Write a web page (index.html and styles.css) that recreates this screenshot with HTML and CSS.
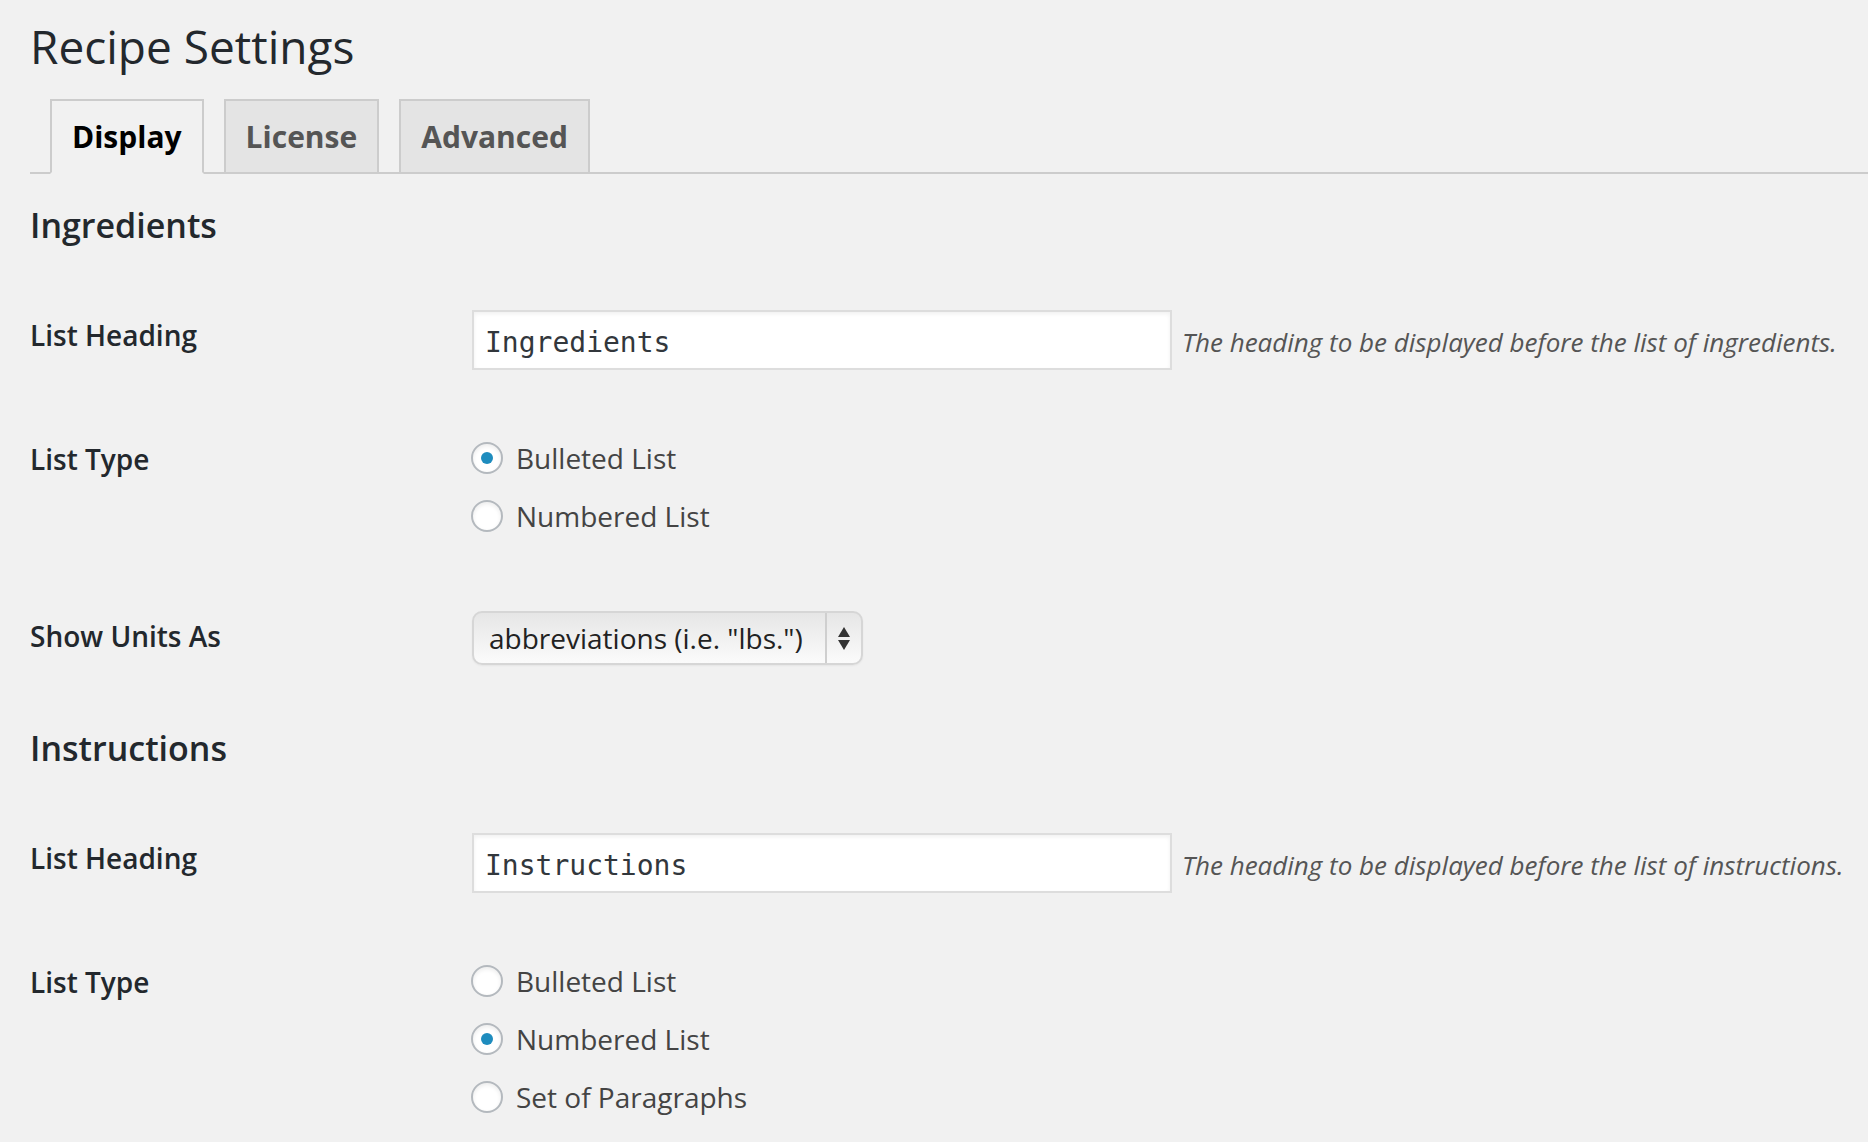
FILE: index.html
```html
<!DOCTYPE html>
<html lang="en">
<head>
<meta charset="utf-8">
<title>Recipe Settings</title>
<link rel="stylesheet" href="styles.css">
</head>
<body>
<div class="wrap">
  <h1 class="page-title">Recipe Settings</h1>
  <nav class="tabs">
    <a class="tab tab-active">Display</a>
    <a class="tab">License</a>
    <a class="tab">Advanced</a>
  </nav>

  <h3 class="section-title">Ingredients</h3>
  <div class="form">
    <div class="row">
      <div class="label label-text">List Heading</div>
      <div class="field field-inline">
        <input class="text-input" type="text" value="Ingredients">
        <span class="description">The heading to be displayed before the list of ingredients.</span>
      </div>
    </div>
    <div class="row">
      <div class="label label-radio">List Type</div>
      <div class="field field-radio">
        <div class="radio-item"><span class="radio radio-checked"></span><span class="radio-label">Bulleted List</span></div>
        <div class="radio-item"><span class="radio"></span><span class="radio-label">Numbered List</span></div>
      </div>
    </div>
    <div class="row">
      <div class="label label-select">Show Units As</div>
      <div class="field field-select">
        <div class="select">
          <span class="select-value">abbreviations (i.e. "lbs.")</span>
          <span class="select-arrows"><span class="arrow-up"></span><span class="arrow-down"></span></span>
        </div>
      </div>
    </div>
  </div>

  <h3 class="section-title section-second">Instructions</h3>
  <div class="form">
    <div class="row">
      <div class="label label-text">List Heading</div>
      <div class="field field-inline">
        <input class="text-input" type="text" value="Instructions">
        <span class="description">The heading to be displayed before the list of instructions.</span>
      </div>
    </div>
    <div class="row">
      <div class="label label-radio">List Type</div>
      <div class="field field-radio field-last">
        <div class="radio-item"><span class="radio"></span><span class="radio-label">Bulleted List</span></div>
        <div class="radio-item"><span class="radio radio-checked"></span><span class="radio-label">Numbered List</span></div>
        <div class="radio-item"><span class="radio"></span><span class="radio-label">Set of Paragraphs</span></div>
      </div>
    </div>
  </div>
</div>
</body>
</html>
```

FILE: styles.css
```css
html, body {
  margin: 0;
  padding: 0;
  background: #f1f1f1;
  overflow: hidden;
}

body {
  font-family: "Open Sans", "Liberation Sans", sans-serif;
  color: #444;
}

.wrap {
  padding-left: 30px;
}

.page-title {
  margin: 16px 0 0;
  font-size: 46px;
  font-weight: 400;
  line-height: 60px;
  color: #23282d;
}

.tabs {
  display: flex;
  margin-top: 23px;
  border-bottom: 2px solid #ccc;
}

.tab {
  margin-left: 20px;
  margin-bottom: -2px;
  padding: 12px 20px 11px;
  border: 2px solid #ccc;
  background: #e4e4e4;
  font-size: 30px;
  font-weight: 700;
  line-height: 48px;
  color: #555;
}

.tab-active {
  background: #f1f1f1;
  border-bottom-color: #f1f1f1;
  color: #000;
}

.section-title {
  margin: 29px 0 33px;
  font-size: 34px;
  font-weight: 600;
  line-height: 44px;
  color: #23282d;
}

.section-second {
  margin-top: 31px;
  margin-bottom: 33px;
}

.row {
  display: flex;
  align-items: flex-start;
}

.label {
  width: 442px;
  flex-shrink: 0;
  font-size: 28px;
  font-weight: 600;
  line-height: 36px;
  color: #23282d;
}

.label-text { padding-top: 37px; }
.label-radio { padding-top: 41px; }
.label-select { padding-top: 44px; }

.field {
  padding: 30px 0;
}

.field-inline {
  display: flex;
  align-items: baseline;
  white-space: nowrap;
}

.text-input {
  width: 700px;
  height: 60px;
  box-sizing: border-box;
  margin: 0;
  padding: 4px 11px 0;
  border: 2px solid #ddd;
  background: #fff;
  box-shadow: inset 0 2px 4px rgba(0, 0, 0, 0.06);
  font-family: "DejaVu Sans Mono", "Liberation Mono", monospace;
  font-size: 28px;
  color: #32373c;
  outline: none;
}

.description {
  margin-left: 10px;
  font-size: 26px;
  font-style: italic;
  color: #555;
}

.field-radio {
  padding-top: 29px;
  padding-bottom: 29px;
  display: flex;
  flex-direction: column;
}

.field-last {
  padding-bottom: 0;
}

.radio-item {
  display: flex;
  align-items: center;
  height: 58px;
  font-size: 28px;
  line-height: 36px;
  color: #444;
}

.radio {
  width: 32px;
  height: 32px;
  box-sizing: border-box;
  margin: 0 13px 0 -1px;
  border: 2px solid #b4b9be;
  border-radius: 50%;
  background: #fff;
  box-shadow: inset 0 2px 4px rgba(0, 0, 0, 0.08);
  display: flex;
  align-items: center;
  justify-content: center;
}

.radio-checked::after {
  content: "";
  width: 12px;
  height: 12px;
  border-radius: 50%;
  background: #1e8cbe;
}

.field-select {
  padding-top: 37px;
}

.select {
  display: flex;
  width: 391px;
  height: 54px;
  box-sizing: border-box;
  border: 2px solid #d6d6d6;
  border-radius: 10px;
  background: linear-gradient(#e6e6e6, #fbfbfb);
  box-shadow: 0 1px 2px rgba(0, 0, 0, 0.05);
  font-size: 28px;
  color: #222;
}

.select-value {
  flex: 1;
  display: flex;
  align-items: center;
  padding-left: 15px;
  white-space: nowrap;
}

.select-arrows {
  width: 34px;
  border-left: 2px solid #cfcfcf;
  display: flex;
  flex-direction: column;
  align-items: center;
  justify-content: center;
  gap: 3px;
}

.arrow-up {
  width: 0;
  height: 0;
  border-left: 6.5px solid transparent;
  border-right: 6.5px solid transparent;
  border-bottom: 10px solid #333;
}

.arrow-down {
  width: 0;
  height: 0;
  border-left: 6.5px solid transparent;
  border-right: 6.5px solid transparent;
  border-top: 10px solid #333;
}
```
